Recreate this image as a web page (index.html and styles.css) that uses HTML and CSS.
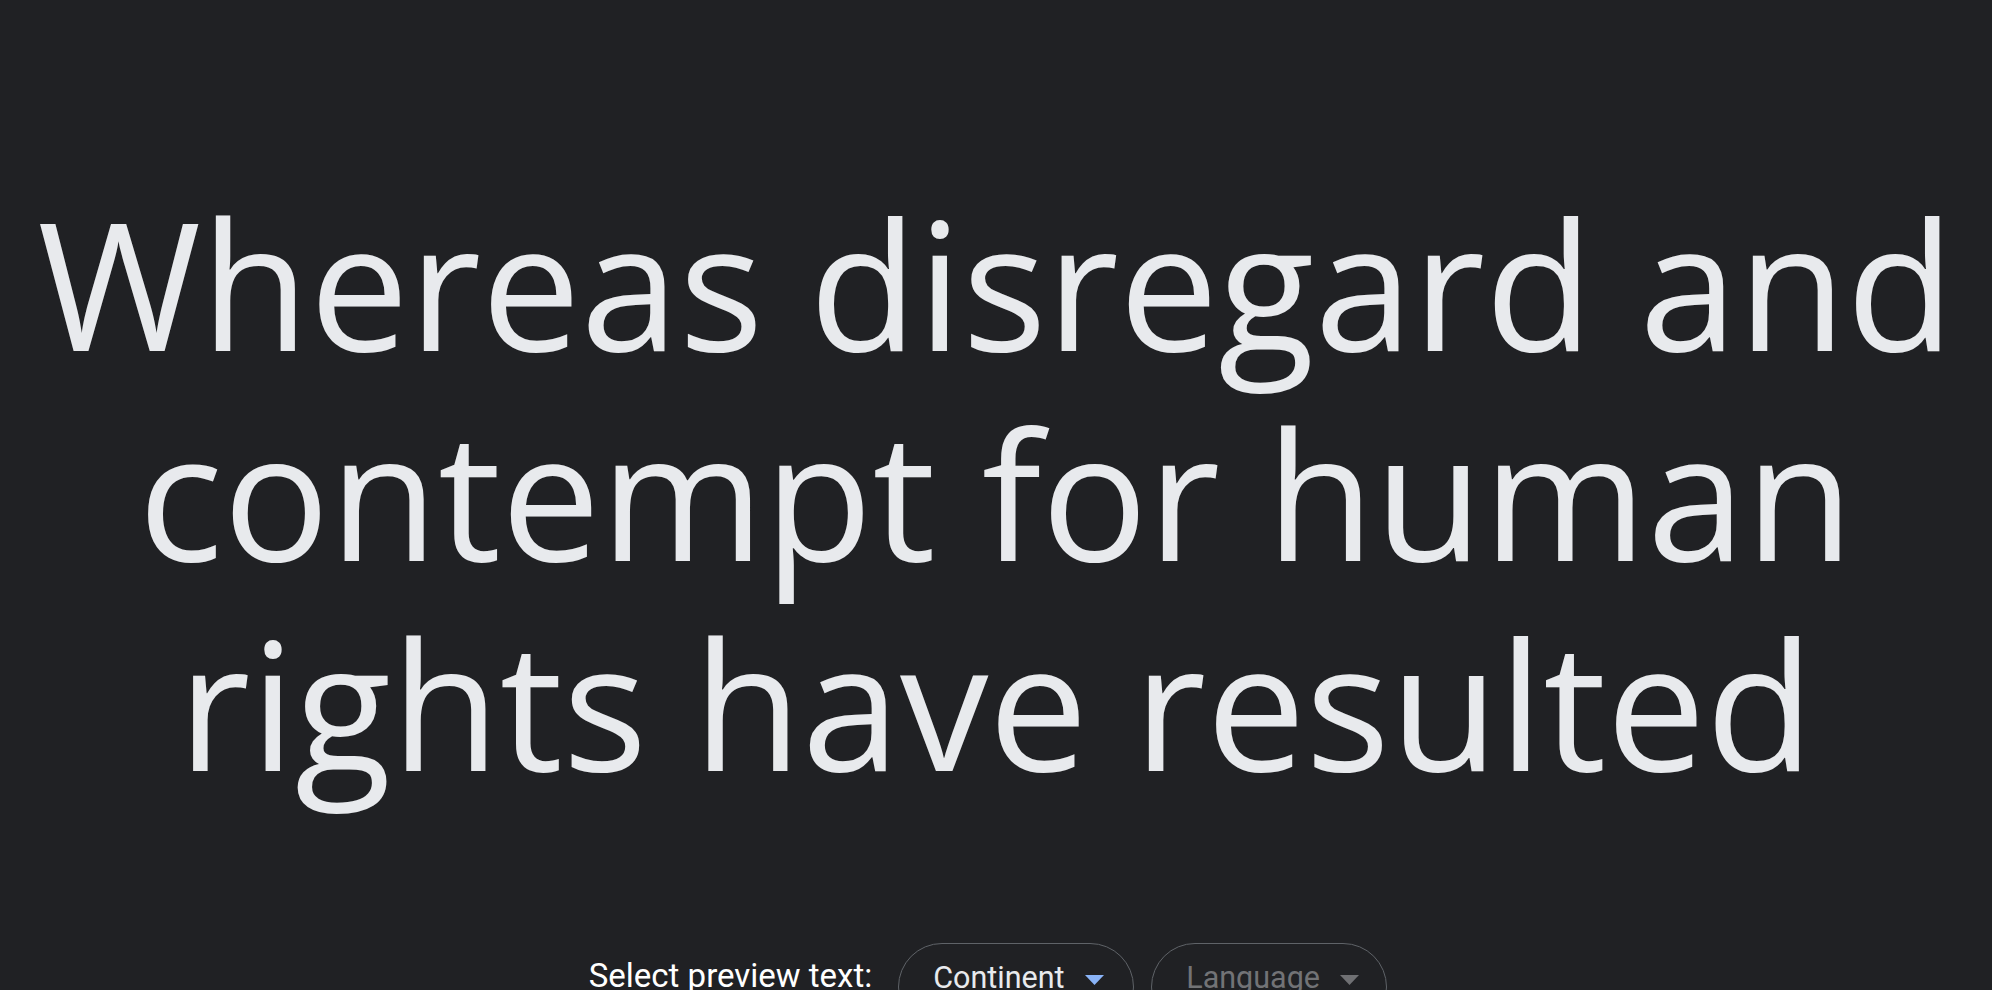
FILE: index.html
```html
<!DOCTYPE html>
<html lang="en">
<head>
<meta charset="utf-8">
<title>Preview</title>
<link rel="stylesheet" href="styles.css">
</head>
<body>
<main class="page">
  <h1 class="preview">Whereas disregard and contempt for human rights have resulted</h1>
  <div class="controls">
    <span class="label">Select preview text:</span>
    <button class="pill">
      <span class="pill-text">Continent</span>
      <svg class="caret" width="19" height="10" viewBox="0 0 19 10"><path d="M0 0h19L9.5 10z" fill="#8ab4f8"/></svg>
    </button>
    <button class="pill pill-disabled">
      <span class="pill-text">Language</span>
      <svg class="caret" width="19" height="10" viewBox="0 0 19 10"><path d="M0 0h19L9.5 10z" fill="#6f7073"/></svg>
    </button>
  </div>
</main>
</body>
</html>
```

FILE: styles.css
```css
html, body {
  margin: 0;
  padding: 0;
  background: #202124;
  height: 100%;
  overflow: hidden;
}
.page {
  display: flex;
  flex-direction: column;
  align-items: center;
  padding-top: 178px;
}
.preview {
  margin: 0;
  width: 1980px;
  text-align: center;
  font-family: "Open Sans", sans-serif;
  font-weight: 400;
  font-size: 177px;
  line-height: 210px;
  color: #e8eaed;
}
.controls {
  display: flex;
  align-items: flex-start;
  gap: 17px;
  margin-top: 135px;
  margin-right: 16px;
}
.label {
  font-family: Roboto, "Liberation Sans", sans-serif;
  font-size: 33px;
  line-height: 40px;
  padding-top: 13px;
  color: #ffffff;
  margin-right: 9px;
  white-space: nowrap;
}
.pill {
  display: flex;
  align-items: flex-start;
  gap: 20px;
  box-sizing: border-box;
  width: 236px;
  height: 88px;
  padding: 16px 30px 0 34px;
  border: 1px solid #5f6368;
  border-radius: 44px;
  background: transparent;
  font-family: Roboto, "Liberation Sans", sans-serif;
  font-size: 30.5px;
  line-height: 36px;
  color: #e8eaed;
}
.pill-text {
  white-space: nowrap;
}
.pill-disabled {
  color: #727376;
}
.caret {
  display: block;
  flex-shrink: 0;
  margin-top: 15px;
}
```
